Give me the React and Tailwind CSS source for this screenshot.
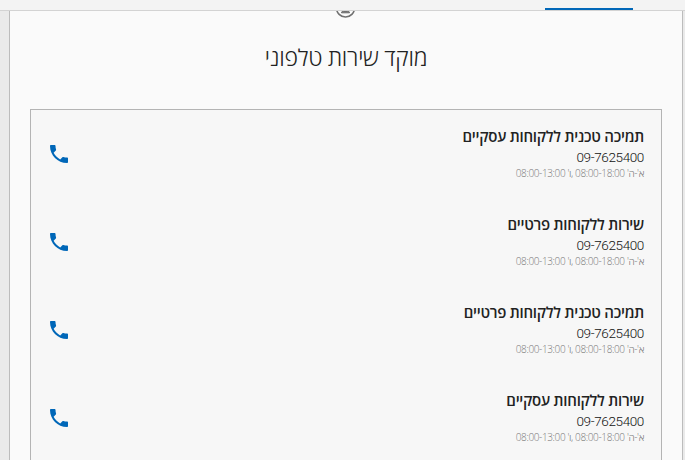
const CONTACTS = [
  { title: 'תמיכה טכנית ללקוחות עסקיים', phone: '09-7625400' },
  { title: 'שירות ללקוחות פרטיים',       phone: '09-7625400' },
  { title: 'תמיכה טכנית ללקוחות פרטיים', phone: '09-7625400' },
  { title: 'שירות ללקוחות עסקיים',       phone: '09-7625400' },
];

const PhoneIcon = () => (
  <svg className="h-6 w-6 text-[#0067b8]" viewBox="0 0 24 24" fill="currentColor">
    <path d="M6.62 10.79c1.44 2.83 3.76 5.14 6.59 6.59l2.2-2.2c.27-.27.67-.36 1.02-.24 1.12.37 2.33.57 3.57.57.55 0 1 .45 1 1V20c0 .55-.45 1-1 1-9.39 0-17-7.61-17-17 0-.55.45-1 1-1h3.5c.55 0 1 .45 1 1 0 1.25.2 2.45.57 3.57.11.35.03.74-.25 1.02l-2.2 2.2z" />
  </svg>
);

// ── Contact Row ───────────────────────────────────────────────
function ContactRow({ title, phone }) {
  return (
    <div className="flex h-[88px] items-start justify-between whitespace-nowrap pl-[15.5px] pr-[17px]">
      <div>
        <p className="text-[15px] font-semibold leading-6 tracking-[-0.25px] text-[#222]">{title}</p>
        <p className="font-[Roboto,sans-serif] text-[13.5px] font-light leading-[18px] tracking-[-0.37px] text-[#111]">{phone}</p>
        <p className="text-[10px] font-light leading-[14px] tracking-[-0.37px] text-[#777]">א'-ה' 08:00-18:00 ,ו' 08:00-13:00</p>
      </div>
      <div className="pt-[18px]">
        <PhoneIcon />
      </div>
    </div>
  );
}

export default function App() {
  return (
    <div dir="rtl" className="flex h-[460px] w-[685px] flex-col overflow-hidden bg-[#eaeaea] font-['Open_Sans','Noto_Sans',sans-serif]">
      {/* Tab bar */}
      <div className="flex h-[11px] shrink-0 items-end border-b border-[#d3d3d3] bg-[#f3f3f3] pr-[52px]">
        <div className="h-[2px] w-[88px] bg-[#0067b8]" />
      </div>

      <div className="ml-[9px] mr-[2px] flex-1 overflow-hidden border-x border-[#bcbcbc] bg-[#fafafa] px-5">
        {/* Agent icon, cut off by the tab bar */}
        <div className="flex h-[7px] items-end justify-center">
          <svg className="h-5 w-5 shrink-0" viewBox="0 0 20 20" fill="none" stroke="#707070">
            <circle cx="9.5" cy="10" r="9" strokeWidth="1.6" />
            <path d="M5.500 14.800V14c2-1.200 6-1.200 8 0v.8z" fill="#707070" />
          </svg>
        </div>

        <h1 className="mt-[21px] text-center text-[23px] font-light leading-9 tracking-[-0.25px] text-[#222]">מוקד שירות טלפוני</h1>

        <div className="mt-[34px] h-[400px] border border-[#b4b4b4] bg-[#f7f7f7] pt-[14px]">
          {CONTACTS.map((contact, i) => <ContactRow key={i} {...contact} />)}
        </div>
      </div>
    </div>
  );
}
